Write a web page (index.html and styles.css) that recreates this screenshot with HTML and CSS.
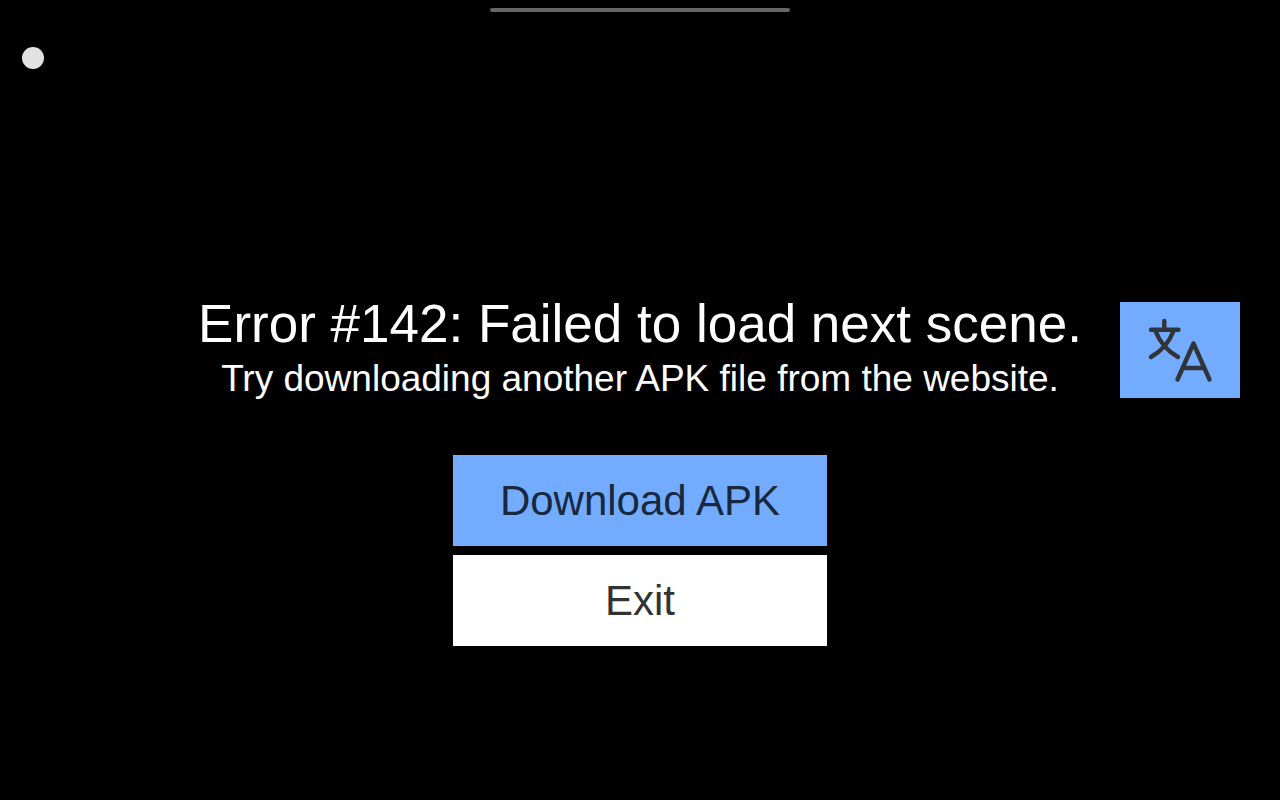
FILE: index.html
```html
<!DOCTYPE html>
<html lang="en">
<head>
    <meta charset="UTF-8">
    <meta name="viewport" content="width=device-width, initial-scale=1.0">
    <title>Error #142</title>
    <link rel="stylesheet" href="styles.css">
</head>
<body>
    <span class="handle"></span>
    <span class="dot"></span>

    <div class="screen">
        <main class="message">
            <h1>Error #142: Failed to load next scene.</h1>
            <p>Try downloading another APK file from the website.</p>
        </main>
        <button type="button" class="btn-lang" aria-label="Change language">
            <svg viewBox="0 0 120 96" fill="none" stroke="#303539" stroke-width="4.4" stroke-linecap="round" stroke-linejoin="round">
                <path d="M44.3 19v8M31 27.7h27.5M35.5 29Q42 46 58 55M53.5 29Q47 46 31 55"/>
                <path d="M57.5 77.5l16-36 16 36M63 66h21"/>
            </svg>
        </button>
    </div>

    <div class="actions">
        <button type="button" class="btn btn-primary">Download APK</button>
        <button type="button" class="btn">Exit</button>
    </div>
</body>
</html>
```
FILE: styles.css
```css
* {
    margin: 0;
    padding: 0;
    box-sizing: border-box;
    font-family: 'Liberation Sans', Arial, sans-serif;
}

body {
    background-color: #000;
    color: #fff;
    min-height: 100vh;
    display: flex;
    flex-direction: column;
    justify-content: center;
    padding-top: 141px;
}

/* system overlays */
.handle {
    position: absolute;
    top: 8px;
    left: 50%;
    width: 300px;
    height: 4px;
    margin-left: -150px;
    border-radius: 2px;
    background: #666;
}

.dot {
    position: absolute;
    top: 47px;
    left: 22px;
    width: 22px;
    height: 22px;
    border-radius: 50%;
    background: #e2e2e2;
}

.screen {
    display: grid;
    grid-template-columns: 120px 1fr 120px;
    align-items: center;
    padding: 0 40px;
}

.message {
    grid-column: 2;
    text-align: center;
    white-space: nowrap;
}

h1 {
    font-size: 53px;
    font-weight: 400;
    line-height: 58px;
}

.message p {
    font-size: 37px;
    line-height: 52px;
}

button {
    border: none;
    color: #323232;
    cursor: pointer;
}

.btn-lang {
    height: 96px;
    background: #73acff;
}

.btn-lang svg {
    display: block;
    width: 100%;
}

.actions {
    display: flex;
    flex-direction: column;
    align-items: center;
    gap: 9px;
    margin-top: 50px;
}

.btn {
    width: 374px;
    height: 91px;
    background: #fff;
    font-size: 42px;
}

.btn-primary {
    background: #73acff;
    color: #17283f;
}
```
